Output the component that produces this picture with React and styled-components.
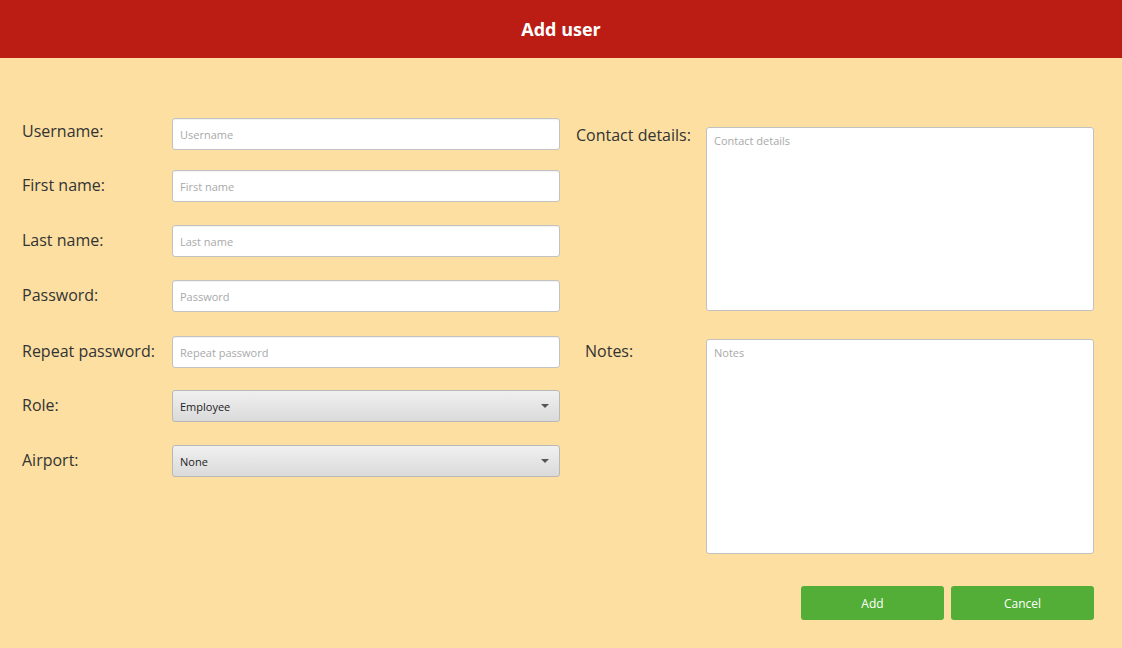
import React from 'react'
import styled, { createGlobalStyle } from 'styled-components';

const GlobalStyle = createGlobalStyle`
    html, body {
        margin: 0;
        padding: 0;
        background: #fcdfa1;
        font-family: "Open Sans", "Noto Sans", sans-serif;
    }
`;

const leftFields = [
    { label: 'Username:', placeholder: 'Username', top: 0, raise: 6 },
    { label: 'First name:', placeholder: 'First name', top: 20 },
    { label: 'Last name:', placeholder: 'Last name', top: 23 },
    { label: 'Password:', placeholder: 'Password', top: 23 },
    { label: 'Repeat password:', placeholder: 'Repeat password', top: 24 },
];

const selects = [
    { label: 'Role:', value: 'Employee', top: 22 },
    { label: 'Airport:', value: 'None', top: 23 },
];

function App() {
    return (
        <Page>
            <GlobalStyle />
            <Header>Add user</Header>
            <Body>
                <LeftColumn>
                    {leftFields.map((f) => (
                        <Row key={f.label} $top={f.top}>
                            <Label $raise={f.raise}>{f.label}</Label>
                            <Input placeholder={f.placeholder} />
                        </Row>
                    ))}
                    {selects.map((s) => (
                        <Row key={s.label} $top={s.top}>
                            <Label $raise={2}>{s.label}</Label>
                            <Select>
                                <span>{s.value}</span>
                                <Caret />
                            </Select>
                        </Row>
                    ))}
                </LeftColumn>
                <RightColumn>
                    <AreaRow>
                        <AreaLabel>Contact details:</AreaLabel>
                        <TextArea $height={184} placeholder="Contact details" />
                    </AreaRow>
                    <AreaRow $top={28}>
                        <AreaLabel $indent={9} $drop={4}>Notes:</AreaLabel>
                        <TextArea $height={215} placeholder="Notes" />
                    </AreaRow>
                    <Buttons>
                        <Button>Add</Button>
                        <Button>Cancel</Button>
                    </Buttons>
                </RightColumn>
            </Body>
        </Page>
    )
}

export default App

const Page = styled.div`
    width: 1122px;
    height: 648px;
    background: #fcdfa1;
    overflow: hidden;
`;
const Header = styled.div`
    height: 58px;
    background: #bb1d15;
    color: #fff;
    font-weight: 700;
    font-size: 18px;
    display: flex;
    align-items: center;
    justify-content: center;
`;
const Body = styled.div`
    display: flex;
    padding: 60px 29px 0 22px;
`;
const LeftColumn = styled.div`
    display: flex;
    flex-direction: column;
    width: 538px;
`;
const Row = styled.div`
    display: flex;
    align-items: center;
    margin-top: ${(p) => p.$top}px;
`;
const Label = styled.div`
    width: 150px;
    font-size: 16px;
    color: #333;
    margin-top: ${(p) => -(p.$raise ?? 3)}px;
`;
const Input = styled.input`
    box-sizing: border-box;
    width: 388px;
    height: 32px;
    border: 1px solid #c2c2c2;
    border-radius: 3px;
    background: #fff;
    padding: 0 7px;
    font-family: inherit;
    font-size: 11px;
    outline: none;
    box-shadow: inset 0 1px 1px rgba(0,0,0,0.06);
    &::placeholder {
        color: #a9a9a9;
    }
`;
const Select = styled.div`
    box-sizing: border-box;
    width: 388px;
    height: 32px;
    border: 1px solid #b8b8b8;
    border-radius: 3px;
    background: linear-gradient(#f0f0f0, #dadada);
    padding: 0 10px 0 7px;
    display: flex;
    align-items: center;
    justify-content: space-between;
    font-size: 11px;
    color: #222;
`;
const Caret = styled.div`
    width: 0;
    height: 0;
    border-left: 4px solid transparent;
    border-right: 4px solid transparent;
    border-top: 4px solid #555;
`;
const RightColumn = styled.div`
    display: flex;
    flex-direction: column;
    margin-left: 16px;
    padding-top: 9px;
`;
const AreaRow = styled.div`
    display: flex;
    margin-top: ${(p) => p.$top || 0}px;
`;
const AreaLabel = styled.div`
    width: ${(p) => 130 - (p.$indent || 0)}px;
    padding-left: ${(p) => p.$indent || 0}px;
    font-size: 16px;
    color: #333;
    margin-top: ${(p) => (p.$drop || 0) - 3}px;
`;
const TextArea = styled.textarea`
    box-sizing: border-box;
    width: 388px;
    height: ${(p) => p.$height}px;
    border: 1px solid #c2c2c2;
    border-radius: 3px;
    background: #fff;
    padding: 5px 7px;
    font-family: inherit;
    font-size: 11px;
    resize: none;
    outline: none;
    &::placeholder {
        color: #a9a9a9;
    }
`;
const Buttons = styled.div`
    display: flex;
    justify-content: flex-end;
    gap: 7px;
    margin-top: 32px;
`;
const Button = styled.button`
    width: 143px;
    height: 34px;
    border: none;
    border-radius: 3px;
    background: #53ae37;
    color: #fff;
    font-family: inherit;
    font-size: 12px;
`;
